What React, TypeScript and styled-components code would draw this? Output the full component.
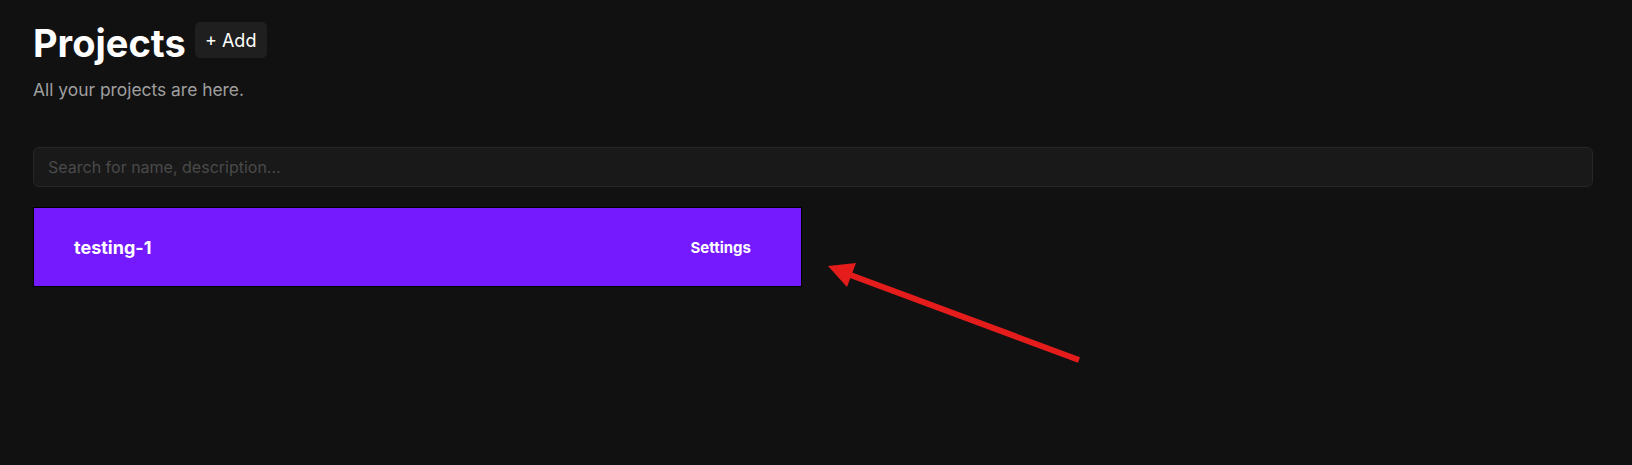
import React from "react";
import styled, { createGlobalStyle } from "styled-components";

const GlobalStyle = createGlobalStyle`
  html, body {
    margin: 0;
    padding: 0;
    background: #111111;
    font-family: "Inter", "Noto Sans", sans-serif;
    color: #ffffff;
  }
  * {
    box-sizing: border-box;
  }
`;

const StyledPage = styled.div`
  position: relative;
  min-height: 465px;
  padding: 22px 39px 0 33px;
`;

const StyledHeader = styled.div`
  display: flex;
  align-items: flex-start;
  gap: 9px;
`;

const StyledTitle = styled.h1`
  margin: 0;
  font-size: 38px;
  line-height: 42px;
  font-weight: 700;
  color: #ffffff;
`;

const StyledAddButton = styled.button`
  height: 36px;
  width: 72px;
  padding: 0;
  border: none;
  border-radius: 5px;
  background: #1f1f1f;
  color: #ffffff;
  font-family: inherit;
  font-size: 18px;
  cursor: pointer;
`;

const StyledSubtitle = styled.p`
  margin: 14px 0 0;
  font-size: 17.4px;
  line-height: 24px;
  color: #9f9f9f;
`;

const StyledSearch = styled.input`
  display: block;
  width: 100%;
  height: 40px;
  margin-top: 45px;
  padding: 0 14px;
  border: 1px solid #262626;
  border-radius: 6px;
  background: #191919;
  color: #ffffff;
  font-family: inherit;
  font-size: 16px;
  outline: none;

  &::placeholder {
    color: #4a4a4a;
  }
`;

const StyledGrid = styled.div`
  display: grid;
  grid-template-columns: 1fr 1fr;
  gap: 22px;
  margin-top: 20px;
`;

const StyledCard = styled.div`
  display: flex;
  align-items: center;
  justify-content: space-between;
  height: 80px;
  padding: 0 40px;
  border: 1px solid #000000;
  background: #7519ff;
`;

const StyledCardName = styled.span`
  font-size: 18px;
  font-weight: 700;
  color: #ffffff;
`;

const StyledCardAction = styled.button`
  padding: 8px 10px;
  border: none;
  background: transparent;
  color: #ffffff;
  font-family: inherit;
  font-size: 15px;
  font-weight: 700;
  cursor: pointer;
`;

const StyledAnnotation = styled.svg`
  position: absolute;
  left: 0;
  top: 0;
  pointer-events: none;
`;

interface IProject {
  name: string;
}

const projects: IProject[] = [{ name: "testing-1" }];

const App: React.FC = () => {
  return (
    <>
      <GlobalStyle />
      <StyledPage>
        <StyledHeader>
          <StyledTitle>Projects</StyledTitle>
          <StyledAddButton>+ Add</StyledAddButton>
        </StyledHeader>
        <StyledSubtitle>All your projects are here.</StyledSubtitle>
        <StyledSearch placeholder="Search for name, description..." />
        <StyledGrid>
          {projects.map(project => (
            <StyledCard key={project.name}>
              <StyledCardName>{project.name}</StyledCardName>
              <StyledCardAction>Settings</StyledCardAction>
            </StyledCard>
          ))}
        </StyledGrid>
        {/* red annotation arrow pointing at the card */}
        <StyledAnnotation width="1632" height="465" viewBox="0 0 1632 465">
          <line x1="1079" y1="360" x2="845" y2="273" stroke="#e41c1c" strokeWidth="6" />
          <polygon points="828,266 856,263 847,287" fill="#e41c1c" />
        </StyledAnnotation>
      </StyledPage>
    </>
  );
};

export default App;
